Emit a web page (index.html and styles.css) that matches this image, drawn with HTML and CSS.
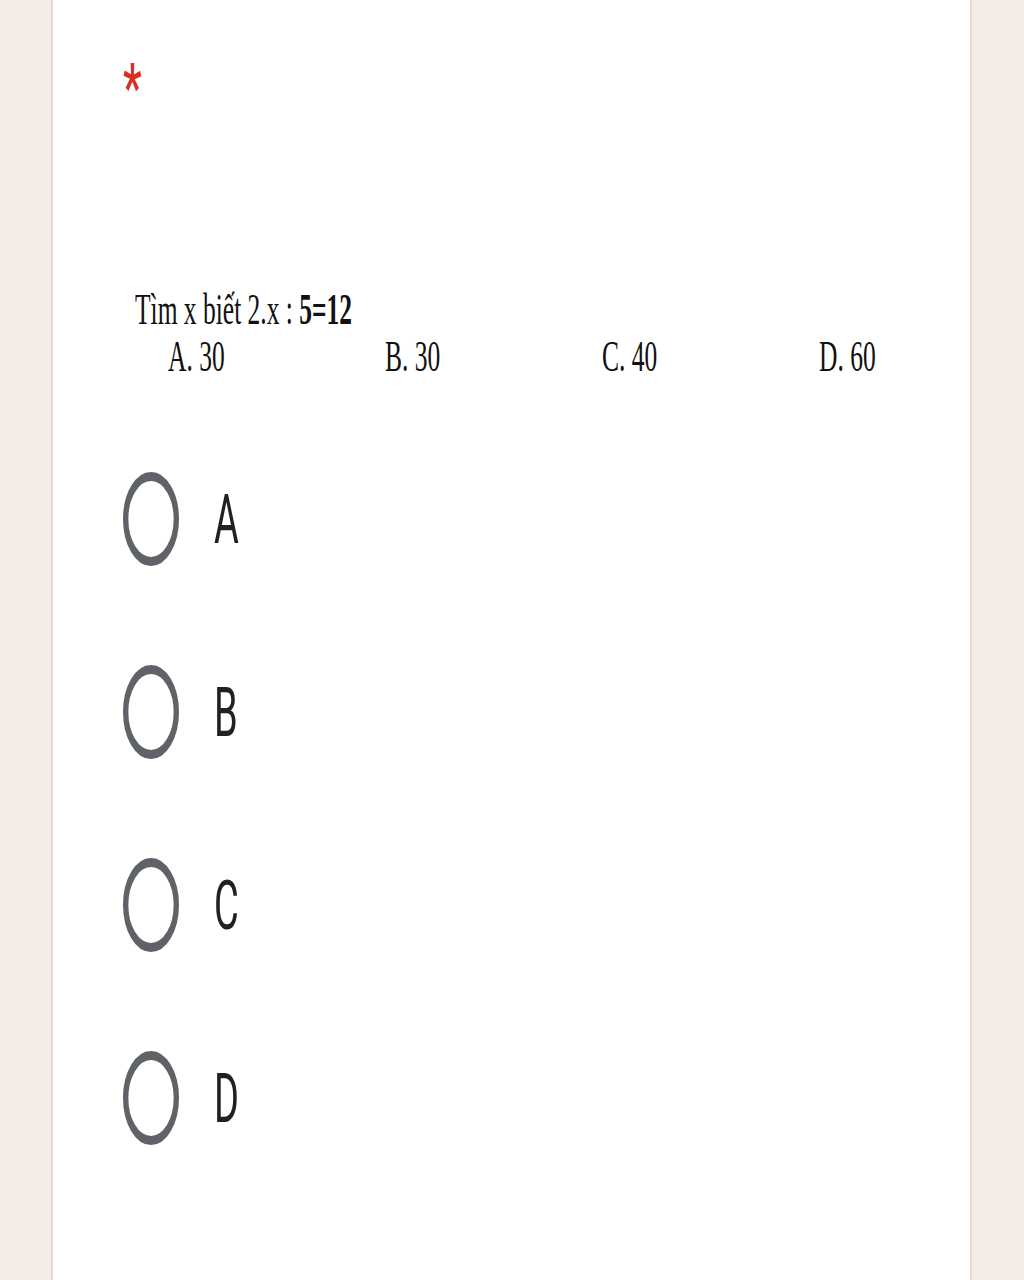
FILE: index.html
```html
<!DOCTYPE html>
<html lang="vi">
<head>
<meta charset="utf-8">
<title>Câu hỏi</title>
<link rel="stylesheet" href="styles.css">
</head>
<body>
<div class="card">
  <div class="req"><span class="star">*</span></div>
  <div class="qimg">
    <div class="qtitle">Tìm x biết 2.x : <b>5=12</b></div>
    <div class="qopts">
      <span>A. 30</span>
      <span>B. 30</span>
      <span>C. 40</span>
      <span>D. 60</span>
    </div>
  </div>
  <div class="choices">
    <div class="choice">
      <svg class="radio" viewBox="0 0 24 24" preserveAspectRatio="none"><circle cx="12" cy="12" r="10.85" fill="none" stroke="#5f6368" stroke-width="2.3"/></svg>
      <span class="lbl">A</span>
    </div>
    <div class="choice">
      <svg class="radio" viewBox="0 0 24 24" preserveAspectRatio="none"><circle cx="12" cy="12" r="10.85" fill="none" stroke="#5f6368" stroke-width="2.3"/></svg>
      <span class="lbl">B</span>
    </div>
    <div class="choice">
      <svg class="radio" viewBox="0 0 24 24" preserveAspectRatio="none"><circle cx="12" cy="12" r="10.85" fill="none" stroke="#5f6368" stroke-width="2.3"/></svg>
      <span class="lbl">C</span>
    </div>
    <div class="choice">
      <svg class="radio" viewBox="0 0 24 24" preserveAspectRatio="none"><circle cx="12" cy="12" r="10.85" fill="none" stroke="#5f6368" stroke-width="2.3"/></svg>
      <span class="lbl">D</span>
    </div>
  </div>
</div>
</body>
</html>
```

FILE: styles.css
```css
html, body {
  margin: 0;
  padding: 0;
}
body {
  background: #f6ece7;
  font-family: Roboto, "Liberation Sans", sans-serif;
  overflow: hidden;
}
.card {
  margin-left: 51px;
  width: 921px;
  min-height: 1280px;
  background: #ffffff;
  border-left: 2px solid #dfdbd8;
  border-right: 2px solid #dfdbd8;
  padding-left: 70px;
  box-sizing: border-box;
}
.req {
  height: 56px;
  padding-top: 57px;
  line-height: 40px;
}
.star {
  display: inline-block;
  color: #d93025;
  font-size: 42px;
  font-weight: 500;
  transform: scaleY(1.6);
  transform-origin: center top;
}
.qimg {
  margin-top: 172px;
  margin-left: 12px;
  height: 54px;
  font-family: "Liberation Serif", "Times New Roman", serif;
  font-size: 25.5px;
  line-height: 27px;
  color: #111;
  transform: scaleY(1.76);
  transform-origin: left top;
}
.qtitle b {
  font-weight: 700;
}
.qopts {
  display: grid;
  grid-template-columns: 217px 217px 217px 217px;
  padding-left: 33px;
}
.choices {
  margin-top: 83px;
  display: flex;
  flex-direction: column;
}
.choice {
  height: 193px;
  display: flex;
  align-items: center;
  gap: 35px;
}
.radio {
  width: 56px;
  height: 94px;
  flex: none;
}
.lbl {
  display: inline-block;
  font-size: 38px;
  line-height: 1;
  color: #202124;
  transform: scaleY(1.82);
  transform-origin: center;
}
```
